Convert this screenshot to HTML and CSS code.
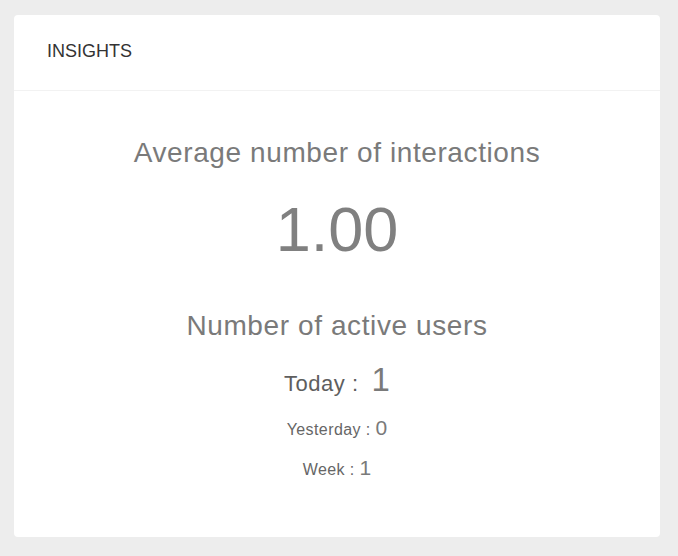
FILE: index.html
```html
<!DOCTYPE html>
<html lang="en">
<head>
<meta charset="utf-8">
<title>Insights</title>
<link rel="stylesheet" href="styles.css">
</head>
<body>
<div class="page">
  <section class="card">
    <header class="card-header">INSIGHTS</header>
    <div class="card-body">
      <h2 class="title">Average number of interactions</h2>
      <div class="big-number">1.00</div>
      <h2 class="title title-users">Number of active users</h2>
      <div class="stat stat-today"><span class="label">Today :</span><span class="value">1</span></div>
      <div class="stat stat-yesterday"><span class="label">Yesterday :</span><span class="value">0</span></div>
      <div class="stat stat-week"><span class="label">Week :</span><span class="value">1</span></div>
    </div>
  </section>
</div>
</body>
</html>
```
FILE: styles.css
```css
html, body {
  margin: 0;
  padding: 0;
  background: #ededed;
}
body {
  font-family: "Liberation Sans", Arial, Helvetica, sans-serif;
  color: #777;
}
.page {
  padding: 15px 18px 18px 14px;
}
.card {
  background: #fff;
  border-radius: 4px;
}
.card-header {
  height: 75px;
  line-height: 72px;
  padding-left: 33px;
  font-size: 18px;
  color: #333;
  border-bottom: 1px solid #f2f2f2;
}
.card-body {
  display: flex;
  flex-direction: column;
  align-items: center;
  padding: 46px 0 57px;
}
.title {
  margin: 0;
  font-weight: normal;
  font-size: 28px;
  line-height: 32px;
  letter-spacing: 0.6px;
  color: #7a7a7a;
}
.big-number {
  margin-top: 24px;
  font-size: 63px;
  line-height: 72px;
  color: #808080;
}
.title-users {
  margin-top: 45px;
}
.stat {
  display: flex;
  align-items: baseline;
  gap: 13px;
}
.stat span {
  line-height: 1.2;
}
.stat-today {
  margin-top: 18px;
}
.stat-today .label {
  font-size: 22px;
  letter-spacing: 0.5px;
  color: #5e5e5e;
}
.stat-today .value {
  font-size: 33px;
  color: #7a7a7a;
}
.stat-yesterday {
  margin-top: 15px;
  gap: 5px;
}
.stat-week {
  margin-top: 15px;
  gap: 5px;
}
.stat-yesterday .label,
.stat-week .label {
  font-size: 16px;
  letter-spacing: 0.4px;
  color: #666;
}
.stat-yesterday .value,
.stat-week .value {
  font-size: 21px;
  color: #7a7a7a;
}
```
